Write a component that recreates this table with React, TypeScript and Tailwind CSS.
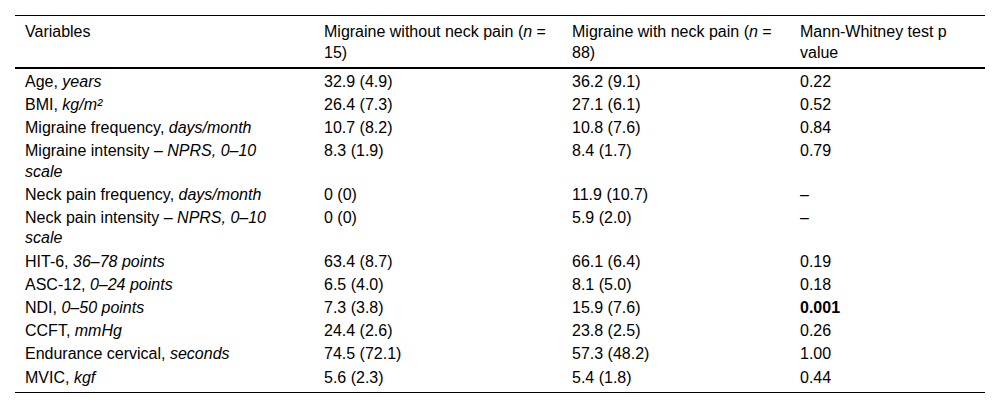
import React from "react";

type Row = { label: string; unit: string; a: string; b: string; p: string; bold?: boolean };

const rows: Row[] = [
  { label: "Age, ", unit: "years", a: "32.9 (4.9)", b: "36.2 (9.1)", p: "0.22" },
  { label: "BMI, ", unit: "kg/m²", a: "26.4 (7.3)", b: "27.1 (6.1)", p: "0.52" },
  { label: "Migraine frequency, ", unit: "days/month", a: "10.7 (8.2)", b: "10.8 (7.6)", p: "0.84" },
  { label: "Migraine intensity – ", unit: "NPRS, 0–10 scale", a: "8.3 (1.9)", b: "8.4 (1.7)", p: "0.79" },
  { label: "Neck pain frequency, ", unit: "days/month", a: "0 (0)", b: "11.9 (10.7)", p: "–" },
  { label: "Neck pain intensity – ", unit: "NPRS, 0–10 scale", a: "0 (0)", b: "5.9 (2.0)", p: "–" },
  { label: "HIT-6, ", unit: "36–78 points", a: "63.4 (8.7)", b: "66.1 (6.4)", p: "0.19" },
  { label: "ASC-12, ", unit: "0–24 points", a: "6.5 (4.0)", b: "8.1 (5.0)", p: "0.18" },
  { label: "NDI, ", unit: "0–50 points", a: "7.3 (3.8)", b: "15.9 (7.6)", p: "0.001", bold: true },
  { label: "CCFT, ", unit: "mmHg", a: "24.4 (2.6)", b: "23.8 (2.5)", p: "0.26" },
  { label: "Endurance cervical, ", unit: "seconds", a: "74.5 (72.1)", b: "57.3 (48.2)", p: "1.00" },
  { label: "MVIC, ", unit: "kgf", a: "5.6 (2.3)", b: "5.4 (1.8)", p: "0.44" },
];

export default function App() {
  return (
    <div className="w-[1000px] h-[409px] bg-white px-[15px] pt-[15px] text-black text-[16px] leading-[20.3px] font-['Liberation_Sans',Arial,sans-serif]">
      <table className="w-[970px] table-fixed border-collapse">
        <thead>
          <tr className="border-t border-black border-b-2 align-top text-left leading-[21px]">
            <th className="w-[299px] font-normal pl-[10px] pt-[5px] pb-[4px]">Variables</th>
            <th className="w-[248px] font-normal pl-[10px] pr-[3px] pt-[5px] pb-[4px]">
              Migraine without neck pain (<i>n</i> = 15)
            </th>
            <th className="w-[228px] font-normal pl-[10px] pr-[8px] pt-[5px] pb-[4px]">
              Migraine with neck pain (<i>n</i> = 88)
            </th>
            <th className="w-[195px] font-normal pl-[10px] pr-[20px] pt-[5px] pb-[4px]">
              Mann-Whitney test p value
            </th>
          </tr>
        </thead>
        <tbody className="border-b border-black">
          {rows.map((r, i) => {
            const last = i === rows.length - 1;
            const pad = last ? "pt-[2.9px] pb-[4px]" : "pt-[2.9px] pb-0";
            return (
              <tr key={r.label} className="align-top">
                <td className={`pl-[10px] pr-[39px] ${pad}`}>
                  {r.label}
                  <i>{r.unit}</i>
                </td>
                <td className={`pl-[10px] ${pad}`}>{r.a}</td>
                <td className={`pl-[10px] ${pad}`}>{r.b}</td>
                <td className={`pl-[10px] ${pad} ${r.bold ? "font-bold" : ""}`}>{r.p}</td>
              </tr>
            );
          })}
        </tbody>
      </table>
    </div>
  );
}
